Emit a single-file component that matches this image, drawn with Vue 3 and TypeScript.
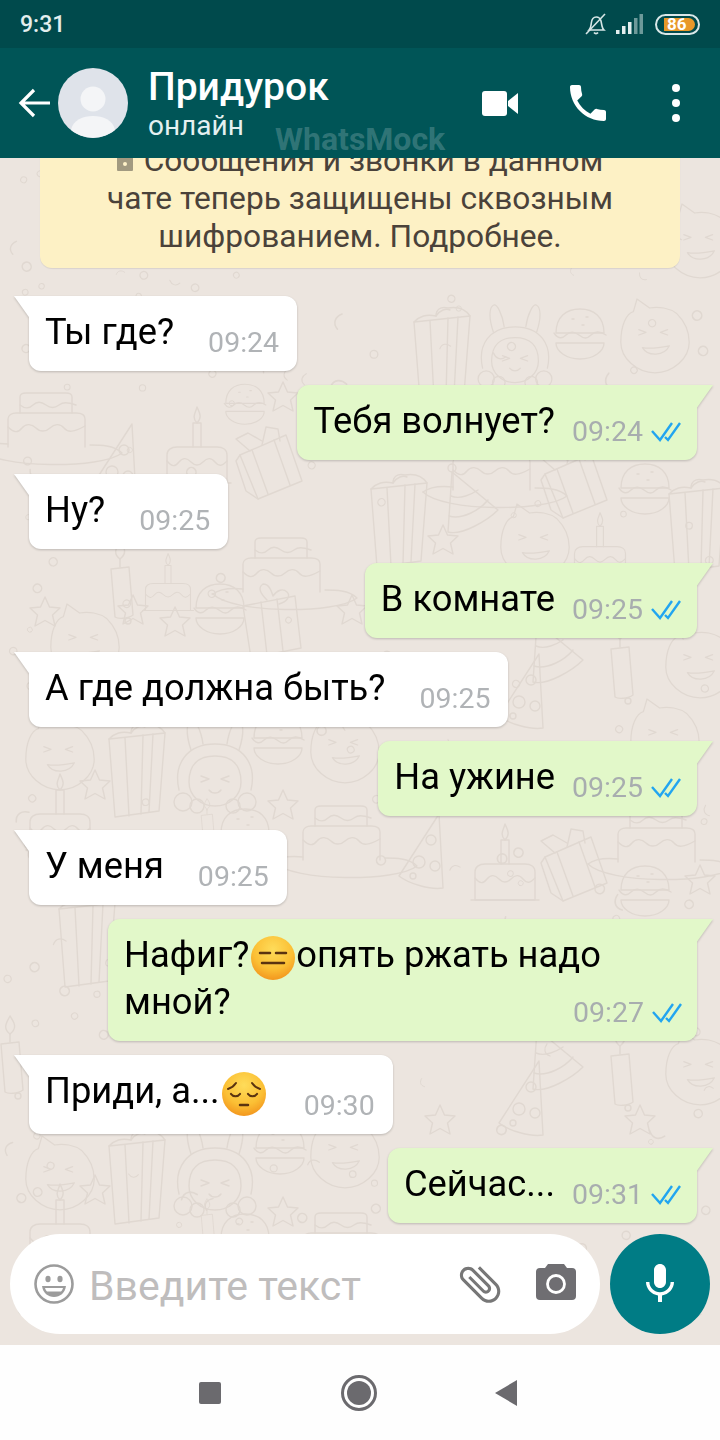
<script setup lang="ts">
interface Message {
  side: 'in' | 'out'
  text: string
  emoji?: 'flat' | 'sad'
  rest?: string
  time: string
  wrapped?: boolean
}

interface Doodle {
  k: string
  x: number
  y: number
  r?: number
  s?: number
}

const messages: Message[] = [
  { side: 'in', text: 'Ты где?', time: '09:24' },
  { side: 'out', text: 'Тебя волнует?', time: '09:24' },
  { side: 'in', text: 'Ну?', time: '09:25' },
  { side: 'out', text: 'В комнате', time: '09:25' },
  { side: 'in', text: 'А где должна быть?', time: '09:25' },
  { side: 'out', text: 'На ужине', time: '09:25' },
  { side: 'in', text: 'У меня', time: '09:25' },
  { side: 'out', text: 'Нафиг?', emoji: 'flat', rest: 'опять ржать надо мной?', time: '09:27', wrapped: true },
  { side: 'in', text: 'Приди, а...', emoji: 'sad', time: '09:30' },
  { side: 'out', text: 'Сейчас...', time: '09:31' },
]

// wallpaper items, in page coordinates
const doodles: Doodle[] = [
  { k: 'tallgift', x: 440, y: 358 },
  { k: 'girl', x: 515, y: 352, s: 0.9 },
  { k: 'burger', x: 580, y: 335 },
  { k: 'cat', x: 655, y: 335, s: 0.9 },
  { k: 'cat', x: 700, y: 240, s: 0.9 },
  { k: 'hatcake', x: 50, y: 425 },
  { k: 'pizza', x: 118, y: 462 },
  { k: 'cake', x: 197, y: 445 },
  { k: 'gift3d', x: 270, y: 463 },
  { k: 'burger', x: 245, y: 405, s: 0.8 },
  { k: 'hatcake', x: 495, y: 468 },
  { k: 'gift3d', x: 575, y: 482 },
  { k: 'burger', x: 645, y: 490 },
  { k: 'tallgift', x: 397, y: 525 },
  { k: 'hat', x: 470, y: 510 },
  { k: 'cat', x: 535, y: 540, s: 0.9 },
  { k: 'cake', x: 600, y: 545, s: 0.85 },
  { k: 'tallgift', x: 695, y: 530 },
  { k: 'candle', x: 120, y: 585 },
  { k: 'cake', x: 168, y: 582, s: 0.75 },
  { k: 'burger', x: 220, y: 610 },
  { k: 'box', x: 273, y: 622 },
  { k: 'hatcake', x: 285, y: 570 },
  { k: 'cat', x: 85, y: 640, s: 0.9 },
  { k: 'hat', x: 555, y: 660 },
  { k: 'candle', x: 620, y: 665 },
  { k: 'cat', x: 700, y: 660, s: 0.9 },
  { k: 'pizza', x: 525, y: 692 },
  { k: 'cat', x: 665, y: 735, s: 0.9 },
  { k: 'cat', x: 60, y: 752, s: 0.9 },
  { k: 'tallgift', x: 135, y: 775 },
  { k: 'girl', x: 215, y: 772 },
  { k: 'burger', x: 278, y: 740 },
  { k: 'cat', x: 345, y: 745, s: 0.9 },
  { k: 'cake', x: 60, y: 812 },
  { k: 'candle', x: 207, y: 825, s: 0.6 },
  { k: 'burger', x: 245, y: 835 },
  { k: 'hatcake', x: 345, y: 838 },
  { k: 'pizza', x: 425, y: 852 },
  { k: 'cake', x: 505, y: 862 },
  { k: 'gift3d', x: 575, y: 865 },
  { k: 'hatcake', x: 660, y: 840 },
  { k: 'burger', x: 645, y: 892 },
  { k: 'tallgift', x: 85, y: 945 },
  { k: 'candle', x: 10, y: 1060 },
  { k: 'hat', x: 555, y: 1067 },
  { k: 'candle', x: 620, y: 1072 },
  { k: 'cat', x: 700, y: 1067, s: 0.9 },
  { k: 'pizza', x: 525, y: 1099 },
  { k: 'cat', x: 60, y: 1172, s: 0.9 },
  { k: 'tallgift', x: 135, y: 1182 },
  { k: 'girl', x: 215, y: 1176 },
  { k: 'burger', x: 280, y: 1150 },
  { k: 'cat', x: 345, y: 1150, s: 0.9 },
  { k: 'cake', x: 60, y: 1222 },
  { k: 'candle', x: 207, y: 1225, s: 0.6 },
  { k: 'burger', x: 245, y: 1240 },
  { k: 'hatcake', x: 345, y: 1245 },
  { k: 'star', x: 283, y: 397 },
  { k: 'star', x: 45, y: 612 },
  { k: 'star', x: 133, y: 610 },
  { k: 'star', x: 175, y: 622 },
  { k: 'star', x: 352, y: 610 },
  { k: 'star', x: 443, y: 540 },
  { k: 'star', x: 95, y: 785 },
  { k: 'star', x: 283, y: 805 },
  { k: 'star', x: 300, y: 700 },
  { k: 'star', x: 440, y: 1120 },
  { k: 'star', x: 700, y: 880 },
  { k: 'star', x: 95, y: 1190 },
  { k: 'star', x: 283, y: 1212 },
  { k: 'star', x: 640, y: 1120 },
]

// small confetti scattered by a fixed sequence, so it's the same on every load
const bits: Doodle[] = []
let seed = 17
const next = (max: number) => {
  seed = (seed * 9301 + 49297) % 233280
  return (seed / 233280) * max
}
for (let i = 0; i < 240; i++) {
  bits.push({
    k: i % 3 === 0 ? 'bit' : 'dot',
    x: next(720),
    y: 158 + next(1187),
    r: next(180),
    s: 0.6 + next(0.6),
  })
}

const place = (d: Doodle) => `translate(${d.x} ${d.y}) rotate(${d.r ?? 0}) scale(${d.s ?? 1})`
</script>

<template>
  <div class="phone">
    <div class="status">
      <span class="clock">9:31</span>
      <svg class="bell" width="24" height="24" viewBox="0 0 24 24" fill="none" stroke="#d6e6e6" stroke-width="1.6">
        <path d="M5 18c2-2 2-4 2.300-7 .4-3.500 2.500-6 5-6 2.300 0 4 1.500 4.700 4l1 5c.3 1.500 1 3 2 4z" />
        <path d="M10 20.500c1 1.500 3 1.500 4 0" />
        <path d="M2 22 21 2" />
      </svg>
      <svg class="signal" width="27" height="20" viewBox="0 0 27 20">
        <rect x="0" y="16" width="3.500" height="4" fill="#e4efef" />
        <rect x="6" y="12" width="3.500" height="8" fill="#e4efef" />
        <rect x="12" y="8" width="3.500" height="12" fill="#e4efef" />
        <rect x="18" y="4" width="3.500" height="16" fill="#6d9a9a" />
        <rect x="23.500" y="0" width="3.500" height="20" fill="#6d9a9a" />
      </svg>
      <div class="battery"><span class="charge">86</span></div>
    </div>

    <header class="appbar">
      <svg class="back" width="32" height="30" viewBox="0 0 32 30" fill="none" stroke="#fff" stroke-width="3.200">
        <path d="M32 15H3M16 2 3 15l13 13" />
      </svg>
      <svg class="avatar" width="70" height="70" viewBox="0 0 70 70">
        <circle cx="35" cy="35" r="35" fill="#dfe3ea" />
        <circle cx="35" cy="31" r="12.500" fill="#f4f5f7" />
        <path d="M13 62c2-10 12-14 22-14s20 4 22 14a35 35 0 0 1-44 0z" fill="#f4f5f7" />
      </svg>
      <div class="who">
        <div class="name">Придурок</div>
        <div class="online">онлайн</div>
      </div>
      <div class="actions">
        <svg width="36" height="25" viewBox="0 0 36 25" fill="#fff">
          <path d="M0 3a3 3 0 0 1 3-3h19a3 3 0 0 1 3 3v19a3 3 0 0 1-3 3H3a3 3 0 0 1-3-3z" />
          <path d="M26 10 36 2v21l-10-8z" />
        </svg>
        <svg class="call" width="48" height="48" viewBox="0 0 24 24" fill="#fff">
          <path d="M6.620 10.790c1.440 2.830 3.760 5.140 6.590 6.590l2.200-2.200c.27-.27.67-.36 1.020-.24 1.120.37 2.330.57 3.570.57.55 0 1 .45 1 1V20c0 .55-.45 1-1 1-9.390 0-17-7.610-17-17 0-.55.45-1 1-1h3.500c.55 0 1 .45 1 1 0 1.250.2 2.450.57 3.570.11.35.03.74-.25 1.020l-2.200 2.200z" />
        </svg>
        <svg class="more" width="8" height="38" viewBox="0 0 8 38" fill="#fff">
          <circle cx="4" cy="4" r="4" />
          <circle cx="4" cy="19" r="4" />
          <circle cx="4" cy="34" r="4" />
        </svg>
      </div>
      <span class="watermark">WhatsMock</span>
    </header>

    <main class="chat">
      <svg class="wallpaper" width="720" height="1187" viewBox="0 158 720 1187" fill="none" stroke="#e0d8d1" stroke-width="1.400" stroke-linejoin="round" stroke-linecap="round">
        <defs>
          <radialGradient id="face" cx="50%" cy="30%" r="75%">
            <stop offset="0" stop-color="#fedc5a" />
            <stop offset="0.6" stop-color="#fbbf34" />
            <stop offset="1" stop-color="#f18f1a" />
          </radialGradient>
          <g id="cake">
            <path d="M-30 38V10c0-5 4-8 10-8h40c6 0 10 3 10 8v28z" />
            <path d="M-30 16c5 6 8 6 12 1s8-4 12 0 8 4 12 0 8-5 12 0 7 4 12-1" />
            <path d="M-34 38h68M-4 2v-24h8V2" />
            <path d="M0-22c-6-6-1-11 0-16 2 5 6 10 0 16z" />
          </g>
          <g id="hatcake">
            <path d="M-72 24c20 20 124 20 144 4-8-8-22-8-32-8" />
            <path d="M-72 24c8-6 20-6 30-5" />
            <path d="M-42 22V-6c0-4 4-6 8-6h60c5 0 9 2 9 6v28" />
            <path d="M-42 2c6 6 10 6 14 1s10-4 14 0 10 4 14 0 10-5 14 0 10 4 21-2" />
            <path d="M-30-12v-16c0-3 3-4 6-4h40c3 0 6 1 6 4v16" />
            <path d="M-30-20c5 4 9 4 13 0s9-3 13 0 9 3 13 0 8-3 17 0" />
          </g>
          <g id="gift3d">
            <path d="M-30-8 16-28 32 18-12 36z" />
            <path d="M-18-13-2 31M4-23 20 22" />
            <path d="M-20-12-34-24l12-6 14 8M-8-18l4-18 12 2 2 12" />
            <path d="M-30-8l-4 6 10 30 12 8" />
          </g>
          <g id="tallgift">
            <path d="M-26-36 30-42 24 36-20 42z" />
            <path d="M-10-37-6 41M8-40 6 39M18-41 14 37" />
            <path d="M-26-36c6-6 12-8 22-6 0-6 4-10 12-8 12-2 18 2 22 8" />
            <path d="M-4-42c4-6 10-8 14-6" />
          </g>
          <g id="box">
            <path d="M-30-16 22-26 28 26-22 36z" />
            <path d="M-12-20-6 33M4-23 10 29" />
            <path d="M-6-22c-6-6-10-12-4-16 6 0 8 6 10 12 4-6 10-8 14-4 4 4 0 10-8 12" />
          </g>
          <g id="pizza">
            <path d="M14-38-26 24c10 8 32 14 44 12z" />
            <circle cx="6" cy="-12" r="5" />
            <circle cx="-6" cy="10" r="6" />
            <circle cx="10" cy="14" r="5" />
            <circle cx="-12" cy="24" r="3" />
          </g>
          <g id="hat">
            <path d="M-18-38-22 22C-8 26 18 10 28 0z" />
            <path d="M-19-14C-10-10 2-16 8-20M-21 6C-8 10 10 0 18-10" />
            <circle cx="-18" cy="-42" r="4" />
          </g>
          <g id="burger">
            <path d="M-24-2c0-16 10-24 24-24s24 8 24 24z" />
            <path d="M-26-2c4 6 8 6 12 2s8-4 13 0 8 4 12 0 9-4 15 0" />
            <path d="M-24 8c0 8 10 16 24 16s24-8 24-16z" />
            <path d="M-8-16h2M6-18h2M2-10h2" />
          </g>
          <g id="candle">
            <path d="M-9-16 9-18 13 30C8 34-2 34-5 32z" />
            <path d="M0-18v-8" />
            <path d="M0-26c-8-6-3-12 0-18 4 6 8 12 0 18z" />
            <circle cx="8" cy="36" r="3" />
          </g>
          <g id="star">
            <path d="M0-15 4.500-5 15-4 7.500 3 10 14 0 8.500-10 14-7.500 3-15-4-4.500-5z" />
          </g>
          <g id="cat">
            <path d="M-38 8c0-18 6-32 14-34l4-14 14 10c10-2 22 0 30 6 8 8 14 20 14 32 0 18-18 34-38 34S-38 26-38 8z" />
            <path d="M-18-6l8 3-8 3M14-6 6-3l8 3" />
            <path d="M-14 14c6 10 24 10 30-2-10 2-20 4-30 2z" />
          </g>
          <g id="girl">
            <path d="M-36 18c-6-26 8-46 36-46s42 20 36 46" />
            <path d="M-24-22c-6-18-4-28 0-30s10 10 12 24M24-22c6-18 4-28 0-30s-10 10-12 24" />
            <path d="M-26 10c0-18 10-26 26-26s26 8 26 26c0 14-12 24-26 24S-26 24-26 10z" />
            <path d="M-14 4l8 3-8 3M14 4 6 7l8 3M-6 18c3 4 9 4 12 0" />
            <circle cx="-32" cy="30" r="9" />
            <circle cx="32" cy="30" r="9" />
            <circle cx="-18" cy="34" r="7" />
            <circle cx="18" cy="34" r="7" />
          </g>
          <circle id="dot" r="4" />
          <path id="bit" d="M-7-3C-3 2 3 3 7-3" />
        </defs>
        <g v-for="(d, i) in bits" :key="'b' + i" :transform="place(d)"><use :href="'#' + d.k" /></g>
        <g v-for="(d, i) in doodles" :key="'d' + i" :transform="place(d)"><use :href="'#' + d.k" /></g>
      </svg>

      <div class="messages">
        <div class="notice">
          <svg class="lock" width="16" height="14" viewBox="0 0 16 14">
            <rect width="16" height="14" rx="1" fill="#a29a80" />
            <circle cx="8" cy="7" r="2" fill="#fff3c8" />
          </svg>
          Сообщения и звонки в данном чате теперь защищены сквозным шифрованием. Подробнее.
        </div>

        <div
          v-for="(m, i) in messages"
          :key="i"
          class="bubble"
          :class="[m.side, { wrapped: m.wrapped }]"
        >
          <div class="text">
            {{ m.text }}<svg v-if="m.emoji" class="emoji" :class="m.emoji" width="44" height="44" viewBox="0 0 44 44" fill="none" stroke="#5a3310" stroke-linecap="round">
              <circle cx="22" cy="22" r="22" fill="url(#face)" stroke="none" />
              <template v-if="m.emoji === 'flat'">
                <path d="M9 17h10M25 17h10" stroke-width="2.500" />
                <path d="M11 27h22" stroke-width="2.500" />
              </template>
              <template v-else>
                <path d="M6 17c3-1 6-3 8-6M38 17c-3-1-6-3-8-6" stroke-width="2" />
                <path d="M9 22c2 3 7 3 9 0M26 22c2 3 7 3 9 0" stroke-width="2.200" />
                <path d="M18 33h8" stroke-width="2.500" />
              </template>
            </svg>{{ m.rest }}
          </div>
          <div class="meta">
            <span class="time">{{ m.time }}</span>
            <svg v-if="m.side === 'out'" class="ticks" width="30" height="20" viewBox="0 0 30 20" fill="none" stroke="#22a5f0" stroke-width="2.400">
              <path d="M1 9l8 9L21 1" />
              <path d="M14 15l3 3L29 1" />
            </svg>
          </div>
        </div>
      </div>

      <div class="composer">
        <div class="field">
          <svg class="smile" width="40" height="40" viewBox="0 0 40 40">
            <circle cx="20" cy="20" r="18.500" fill="none" stroke="#9c9c9c" stroke-width="2.600" />
            <ellipse cx="14" cy="15" rx="2.600" ry="3.200" fill="#9c9c9c" />
            <ellipse cx="26" cy="15" rx="2.600" ry="3.200" fill="#9c9c9c" />
            <path d="M8 22h24c-1 7-6 11-12 11S9 29 8 22z" fill="#9c9c9c" />
            <path d="M11 24h18c-.5 1.500-1 2.500-2 3.500H13c-1-1-1.500-2-2-3.500z" fill="#fff" />
          </svg>
          <span class="placeholder">Введите текст</span>
          <svg class="clip" width="50" height="50" viewBox="0 0 24 24" fill="#777">
            <path d="M16.500 6v11.500c0 2.210-1.790 4-4 4s-4-1.790-4-4V5c0-1.380 1.120-2.500 2.500-2.500s2.500 1.120 2.500 2.500v10.500c0 .55-.45 1-1 1s-1-.45-1-1V6H10v9.500c0 1.380 1.120 2.500 2.500 2.500s2.500-1.120 2.500-2.500V5c0-2.210-1.790-4-4-4S7 2.790 7 5v12.500c0 3.040 2.460 5.500 5.500 5.500s5.500-2.460 5.500-5.500V6h-1.500z" />
          </svg>
          <svg class="camera" width="40" height="36" viewBox="0 0 40 36">
            <path d="M12 0h16l3 4h5a4 4 0 0 1 4 4v24a4 4 0 0 1-4 4H4a4 4 0 0 1-4-4V8a4 4 0 0 1 4-4h5z" fill="#6f6e72" />
            <circle cx="20" cy="20" r="8.500" fill="none" stroke="#fff" stroke-width="2.800" />
          </svg>
        </div>
        <div class="mic">
          <svg width="48" height="48" viewBox="0 0 24 24" fill="#fff">
            <path d="M12 14c1.660 0 2.990-1.340 2.990-3L15 5c0-1.660-1.340-3-3-3S9 3.340 9 5v6c0 1.660 1.340 3 3 3zm5.300-3c0 3-2.540 5.100-5.300 5.100S6.700 14 6.700 11H5c0 3.410 2.720 6.230 6 6.720V21h2v-3.280c3.280-.48 6-3.300 6-6.720h-1.700z" />
          </svg>
        </div>
      </div>
    </main>

    <nav class="nav">
      <span class="square" />
      <svg width="36" height="36" viewBox="0 0 36 36">
        <circle cx="18" cy="18" r="16.500" fill="none" stroke="#6b6a6e" stroke-width="3" />
        <circle cx="18" cy="18" r="12" fill="#6b6a6e" />
      </svg>
      <svg width="22" height="26" viewBox="0 0 22 26">
        <path d="M22 0v26L0 13z" fill="#6b6a6e" />
      </svg>
    </nav>
  </div>
</template>

<style scoped>
.phone {
  width: 720px;
  height: 1440px;
  display: flex;
  flex-direction: column;
  overflow: hidden;
  font-family: Roboto, "Noto Sans", sans-serif;
  background: #fff;
}

.status {
  height: 48px;
  flex-shrink: 0;
  display: flex;
  align-items: center;
  padding: 0 20px;
  background: #004a4c;
  color: #e3eeee;
}

.clock {
  font-size: 23px;
  font-weight: 500;
  margin-right: auto;
}

.bell {
  margin-right: 8px;
}

.signal {
  margin-right: 12px;
}

.battery {
  width: 45px;
  height: 21px;
  box-sizing: border-box;
  border: 2px solid #d9e8e8;
  border-radius: 11px;
  padding: 2px 3px 2px 7px;
  display: flex;
}

.charge {
  flex: 1;
  background: #e8982a;
  border-radius: 0 7px 7px 0;
  color: #fff;
  font-size: 17px;
  font-weight: 700;
  line-height: 13px;
  padding-left: 3px;
}

.appbar {
  height: 110px;
  flex-shrink: 0;
  position: relative;
  display: flex;
  align-items: center;
  background: #005557;
  color: #fff;
}

.back {
  margin-left: 18px;
}

.avatar {
  margin-left: 8px;
}

.who {
  margin-left: 20px;
  margin-top: -1px;
}

.name {
  font-size: 39px;
  font-weight: 500;
  line-height: 46px;
}

.online {
  font-size: 28px;
  line-height: 32px;
  color: #e4f1f1;
}

.actions {
  margin-left: auto;
  display: flex;
  align-items: center;
  padding-right: 40px;
}

.call {
  margin-left: 46px;
}

.more {
  margin-left: 60px;
}

.watermark {
  position: absolute;
  left: 275px;
  top: 72px;
  font-size: 32px;
  font-weight: 700;
  color: rgba(255, 255, 255, 0.2);
}

.chat {
  flex: 1;
  min-height: 0;
  position: relative;
  overflow: hidden;
  display: flex;
  flex-direction: column;
  justify-content: flex-end;
  background: #ece5df;
}

.wallpaper {
  position: absolute;
  left: 0;
  top: 0;
}

.messages {
  position: relative;
  flex-shrink: 0;
  display: flex;
  flex-direction: column;
  gap: 14px;
  padding: 0 23px 11px 29px;
}

.notice {
  width: 640px;
  box-sizing: border-box;
  align-self: center;
  margin: 0 0 14px -6px;
  padding: 12px 60px;
  background: #fdf1c5;
  border-radius: 12px;
  box-shadow: 0 1px 1px rgba(0, 0, 0, 0.08);
  color: #4a423a;
  font-size: 31.700px;
  line-height: 38px;
  text-align: center;
}

.lock {
  margin-right: 3px;
}

.bubble {
  position: relative;
  width: fit-content;
  max-width: 589px;
  box-sizing: border-box;
  display: flex;
  align-items: flex-end;
  padding: 14px 16px 13px 16px;
  border-radius: 12px;
  filter: drop-shadow(0 1px 1px rgba(0, 0, 0, 0.2));
}

.bubble::before {
  content: "";
  position: absolute;
  top: 0;
  width: 17px;
  height: 24px;
}

.in {
  align-self: flex-start;
  padding-right: 18px;
  background: #fff;
  border-top-left-radius: 0;
}

.in::before {
  left: -15px;
  background: #fff;
  clip-path: polygon(0 0, 100% 0, 100% 100%);
}

.out {
  align-self: flex-end;
  background: #e2f8c9;
  border-top-right-radius: 0;
}

.out::before {
  right: -16px;
  background: #e2f8c9;
  clip-path: polygon(0 0, 100% 0, 0 100%);
}

.text {
  color: #000;
  font-size: 36.300px;
  line-height: 43px;
  margin-bottom: 5px;
  white-space: nowrap;
}

.wrapped {
  width: 589px;
}

.wrapped .text {
  flex: 0 0 100%;
  white-space: normal;
}

.wrapped .meta {
  margin-left: -108px;
}

.emoji {
  vertical-align: -13px;
}

.emoji.flat {
  margin: 0 1px 0 2px;
}

.emoji.sad {
  margin: 0 4px 0 2px;
}

.meta {
  display: flex;
  align-items: center;
  height: 30px;
  flex-shrink: 0;
  margin-left: 17px;
}

.in .meta {
  margin-left: 34px;
}

.time {
  color: #a8adaf;
  font-size: 28.500px;
  line-height: 30px;
}

.in .time {
  color: #b0b3b6;
}

.ticks {
  margin-left: 8px;
}

.composer {
  position: relative;
  flex-shrink: 0;
  display: flex;
  gap: 10px;
  padding: 0 10px 11px;
}

.field {
  flex: 1;
  height: 100px;
  display: flex;
  align-items: center;
  padding-left: 24px;
  border-radius: 50px;
  background: #fff;
}

.placeholder {
  margin: 3px 0 0 15px;
  font-size: 41px;
  color: #bfbdbd;
}

.clip {
  margin-left: auto;
  transform: rotate(-45deg);
}

.camera {
  margin: -4px 24px 0 31px;
}

.mic {
  width: 100px;
  height: 100px;
  flex-shrink: 0;
  display: flex;
  align-items: center;
  justify-content: center;
  border-radius: 50%;
  background: #007c85;
}

.nav {
  height: 95px;
  flex-shrink: 0;
  display: flex;
  align-items: center;
  justify-content: center;
  gap: 118px;
  padding-right: 4px;
  background: #fefefe;
}

.square {
  width: 22px;
  height: 22px;
  margin-right: 2px;
  border-radius: 2px;
  background: #6b6a6e;
}
</style>
